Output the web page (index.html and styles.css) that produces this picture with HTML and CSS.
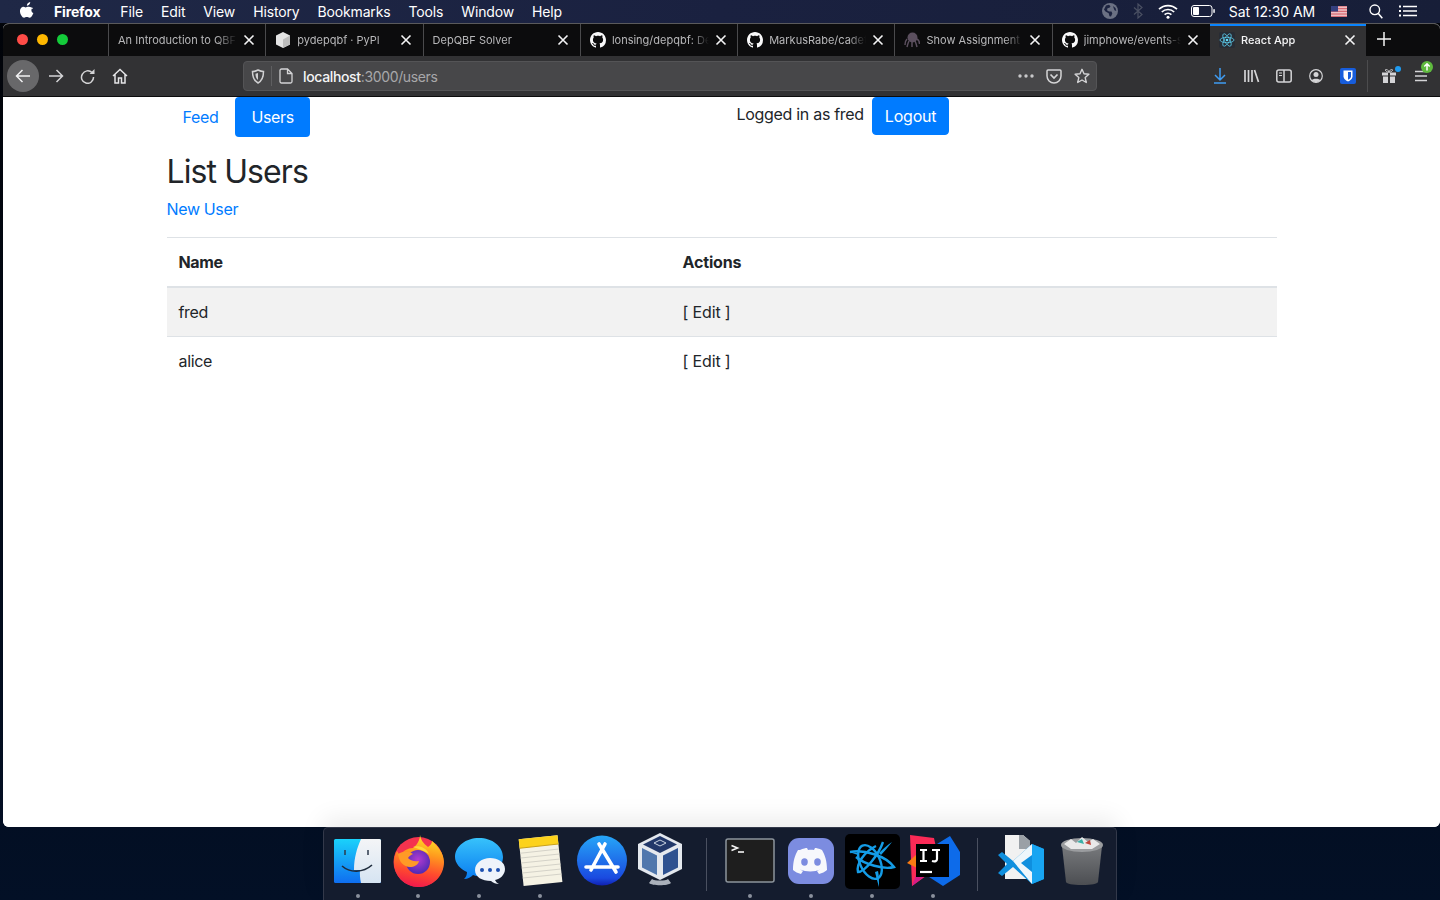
FILE: index.html
```html
<!DOCTYPE html>
<html lang="en">
<head>
    <meta charset="UTF-8">
    <title>React App</title>
    <link rel="stylesheet" href="styles.css">
</head>
<body>
    <svg class="defs" width="0" height="0">
        <symbol id="gh" viewBox="0 0 16 16"><path fill="#f9f9fa" d="M8 0C3.58 0 0 3.58 0 8c0 3.54 2.29 6.53 5.47 7.59.4.07.55-.17.55-.38 0-.19-.01-.82-.01-1.49-2.01.37-2.53-.49-2.69-.94-.09-.23-.48-.94-.82-1.13-.28-.15-.68-.52-.01-.53.63-.01 1.08.58 1.23.82.72 1.21 1.87.87 2.33.66.07-.52.28-.87.51-1.07-1.78-.2-3.64-.89-3.64-3.95 0-.87.31-1.59.82-2.15-.08-.2-.36-1.02.08-2.12 0 0 .67-.21 2.2.82.64-.18 1.32-.27 2-.27.68 0 1.36.09 2 .27 1.53-1.04 2.2-.82 2.2-.82.44 1.1.16 1.92.08 2.12.51.56.82 1.27.82 2.15 0 3.07-1.87 3.75-3.65 3.95.29.25.54.73.54 1.48 0 1.07-.01 1.93-.01 2.2 0 .21.15.46.55.38A8.013 8.013 0 0016 8c0-4.42-3.58-8-8-8z"/></symbol>
        <symbol id="close" viewBox="0 0 12 12"><path d="M1.500 1.500l9 9M10.500 1.500l-9 9" stroke="#f4f4f5" stroke-width="1.600" fill="none"/></symbol>
    </svg>

    <!-- macos menu bar -->
    <header class="menubar">
        <svg class="apple" width="14" height="16" viewBox="0 0 14 16"><path fill="#fff" d="M10.200 0c.1 1-.3 1.900-.9 2.600-.6.7-1.500 1.200-2.400 1.100-.1-.9.3-1.900.9-2.500C8.400.6 9.400.1 10.200 0zM13 5.400c-1 .6-1.600 1.600-1.600 2.800 0 1.300.8 2.400 2 2.900-.3.9-.7 1.800-1.300 2.600-.7 1-1.500 2-2.600 2-1.100 0-1.400-.6-2.700-.6s-1.700.6-2.700.6c-1.100 0-1.900-1-2.600-2C.4 12.300-.2 10.400 0 8.600c.1-1.700 1-3.200 2.500-3.700 1.200-.4 2.300.4 3.100.5.8 0 1.900-.9 3.300-.7 1.600.1 3 .7 3.900 1.700z"/></svg>
        <nav class="menubar-items">
            <span class="app-name">Firefox</span>
            <span>File</span>
            <span>Edit</span>
            <span>View</span>
            <span>History</span>
            <span>Bookmarks</span>
            <span>Tools</span>
            <span>Window</span>
            <span>Help</span>
        </nav>
        <div class="menubar-status">
            <svg class="st-globe" width="16" height="16" viewBox="0 0 16 16"><circle cx="8" cy="8" r="8" fill="#6b7183"/><path fill="#1c2340" d="M4 2.500l3-.8 1.500 1.500-1 1.500-2 .5-.5 2 2 1.200 2.500.2.800 1.800-1.300 3-1.500-.2-.8-3L3.500 8.500 2 6.500zM11 3l2.500 2 .8 3-1.800-.8-.8-2z"/></svg>
            <svg class="st-bt" width="10" height="16" viewBox="0 0 10 16"><path d="M1 4.500l8 7-4 3.500V1l4 3.500-8 7" fill="none" stroke="#4a5063" stroke-width="1.200"/></svg>
            <svg class="st-wifi" width="20" height="15" viewBox="0 0 20 15"><path d="M1 5.200a13 13 0 0118 0M3.800 8a9 9 0 0112.400 0M6.600 10.700a5 5 0 016.800 0" fill="none" stroke="#fff" stroke-width="1.700"/><circle cx="10" cy="13.300" r="1.500" fill="#fff"/></svg>
            <svg class="st-batt" width="24" height="12" viewBox="0 0 24 12"><rect x=".5" y=".5" width="20.500" height="11" rx="2.500" fill="none" stroke="#fff"/><rect x="2" y="2" width="6" height="8" rx="1" fill="#fff"/><rect x="22.300" y="4" width="1.500" height="4" rx=".7" fill="#fff"/></svg>
            <span class="clock">Sat 12:30 AM</span>
            <svg class="st-flag" width="16" height="11" viewBox="0 0 16 11"><rect width="16" height="11" fill="#fff"/><path d="M0 .8h16M0 2.400h16M0 4h16M0 5.600h16M0 7.200h16M0 8.800h16M0 10.400h16" stroke="#c8303c" stroke-width=".8"/><rect width="7" height="5.500" fill="#35407f"/></svg>
            <svg class="st-search" width="14" height="15" viewBox="0 0 14 15"><circle cx="5.800" cy="5.800" r="4.800" fill="none" stroke="#fff" stroke-width="1.400"/><path d="M9.300 9.600l4 4.600" stroke="#fff" stroke-width="1.600"/></svg>
            <svg class="st-list" width="18" height="12" viewBox="0 0 18 12"><path d="M4 1.500h14M4 6h14M4 10.500h14" stroke="#fff" stroke-width="1.500"/><path d="M0 1.500h2M0 6h2M0 10.500h2" stroke="#fff" stroke-width="1.800"/></svg>
        </div>
    </header>

    <div class="window">
        <div class="tabstrip">
            <div class="lights">
                <i class="light red"></i>
                <i class="light yellow"></i>
                <i class="light green"></i>
            </div>
            <div class="tab">
                <span class="tab-title">An Introduction to QBF</span>
                <svg class="tab-close" width="12" height="12"><use href="#close"/></svg>
            </div>
            <div class="tab">
                <svg class="favicon" width="16" height="16" viewBox="0 0 16 16"><path fill="#e4e4e4" d="M8 0l7 3.500v9L8 16l-7-3.500v-9z"/><path fill="#bdbdbd" d="M8 7.500V16l7-3.500v-9z"/></svg>
                <span class="tab-title">pydepqbf · PyPI</span>
                <svg class="tab-close" width="12" height="12"><use href="#close"/></svg>
            </div>
            <div class="tab">
                <span class="tab-title">DepQBF Solver</span>
                <svg class="tab-close" width="12" height="12"><use href="#close"/></svg>
            </div>
            <div class="tab">
                <svg class="favicon" width="16" height="16"><use href="#gh"/></svg>
                <span class="tab-title">lonsing/depqbf: De</span>
                <svg class="tab-close" width="12" height="12"><use href="#close"/></svg>
            </div>
            <div class="tab">
                <svg class="favicon" width="16" height="16"><use href="#gh"/></svg>
                <span class="tab-title">MarkusRabe/cadet</span>
                <svg class="tab-close" width="12" height="12"><use href="#close"/></svg>
            </div>
            <div class="tab">
                <svg class="favicon" width="16" height="16" viewBox="0 0 16 16"><circle cx="8.500" cy="5.500" r="5" fill="#5b4f5e"/><path d="M3 7C1 9 1 12 1 13M5 9c-1 2-1.500 4-2 6M8 10v5M11 9c1 2 1.500 4 2 6M13 7c2 1 2.500 3 2.500 5" stroke="#5b4f5e" stroke-width="1.500" fill="none"/></svg>
                <span class="tab-title">Show Assignment</span>
                <svg class="tab-close" width="12" height="12"><use href="#close"/></svg>
            </div>
            <div class="tab">
                <svg class="favicon" width="16" height="16"><use href="#gh"/></svg>
                <span class="tab-title">jimphowe/events-s</span>
                <svg class="tab-close" width="12" height="12"><use href="#close"/></svg>
            </div>
            <div class="tab tab-active">
                <svg class="favicon" width="16" height="16" viewBox="0 0 16 16"><rect width="16" height="16" rx="2" fill="#282c34"/><g fill="none" stroke="#61dafb" stroke-width=".7"><ellipse cx="8" cy="8" rx="7" ry="2.700"/><ellipse cx="8" cy="8" rx="7" ry="2.700" transform="rotate(60 8 8)"/><ellipse cx="8" cy="8" rx="7" ry="2.700" transform="rotate(120 8 8)"/></g><circle cx="8" cy="8" r="1.300" fill="#61dafb"/></svg>
                <span class="tab-title">React App</span>
                <svg class="tab-close" width="12" height="12"><use href="#close"/></svg>
            </div>
            <div class="newtab">
                <svg width="14" height="14" viewBox="0 0 14 14"><path d="M7 0v14M0 7h14" stroke="#f4f4f5" stroke-width="1.500"/></svg>
            </div>
        </div>

        <div class="toolbar">
            <div class="tb-btn back">
                <svg width="16" height="14" viewBox="0 0 16 14"><path d="M15 7H1.500M7.500 1l-6 6 6 6" fill="none" stroke="#f1f1f2" stroke-width="1.500"/></svg>
            </div>
            <div class="tb-btn forward">
                <svg width="16" height="14" viewBox="0 0 16 14"><path d="M1 7h13.500M8.500 1l6 6-6 6" fill="none" stroke="#d4d4d6" stroke-width="1.500"/></svg>
            </div>
            <div class="tb-btn">
                <svg width="16" height="16" viewBox="0 0 16 16"><path d="M13.500 8.500A6 6 0 112.500 5.500 6 6 0 0112 4" transform="translate(0 .5)" fill="none" stroke="#d4d4d6" stroke-width="1.500"/><path d="M14.500 1v5h-5z" fill="#d4d4d6"/></svg>
            </div>
            <div class="tb-btn">
                <svg width="16" height="16" viewBox="0 0 16 16"><path d="M1 8l7-6.500L15 8M3 6.500V15h3.500v-5h3v5H13V6.500" fill="none" stroke="#e4e4e6" stroke-width="1.500"/></svg>
            </div>

            <div class="urlbar">
                <svg class="url-shield" width="14" height="15" viewBox="0 0 14 15"><path d="M1.500 2.500C3 2.500 5 2 7 1c2 1 4 1.500 5.500 1.500 0 5-1 9-5.500 11.500C2.500 11.500 1.500 7.500 1.500 2.500z" fill="none" stroke="#d0d0d2" stroke-width="1.500"/><path d="M7 4v7C5 9.500 4.500 7.500 4.500 4.800z" fill="#d0d0d2"/></svg>
                <i class="url-sep"></i>
                <svg class="url-page" width="14" height="16" viewBox="0 0 14 16"><path d="M2.500 1H8.500L13 5.500V13.500a1.500 1.500 0 01-1.500 1.500h-9A1.500 1.500 0 011 13.500v-11A1.500 1.500 0 012.500 1zM8.500 1v4.500H13" fill="none" stroke="#d4d4d6" stroke-width="1.300"/></svg>
                <span class="url-text"><b>localhost</b>:3000/users</span>
                <div class="url-actions">
                    <svg width="16" height="4" viewBox="0 0 16 4"><circle cx="2" cy="2" r="1.700" fill="#c8c8ca"/><circle cx="8" cy="2" r="1.700" fill="#c8c8ca"/><circle cx="14" cy="2" r="1.700" fill="#c8c8ca"/></svg>
                    <svg width="16" height="15" viewBox="0 0 16 15"><path d="M2 1h12a1 1 0 011 1v5a7 7 0 01-14 0V2a1 1 0 011-1z" fill="none" stroke="#d4d4d6" stroke-width="1.500"/><path d="M4.500 5.500L8 9l3.500-3.500" fill="none" stroke="#d4d4d6" stroke-width="1.700"/></svg>
                    <svg width="16" height="16" viewBox="0 0 16 16"><path d="M8 1.300l2 4.500 4.900.5-3.700 3.300 1.100 4.900L8 12l-4.300 2.500 1.100-4.900L1.100 6.300 6 5.800z" fill="none" stroke="#d4d4d6" stroke-width="1.400" stroke-linejoin="round"/></svg>
                </div>
            </div>

            <div class="tb-right">
                <div class="tb-btn">
                    <svg width="14" height="16" viewBox="0 0 14 16"><path d="M7 0v11.500M2 7l5 5 5-5" fill="none" stroke="#3f9cf2" stroke-width="1.500"/><path d="M1 15h12" stroke="#3f9cf2" stroke-width="1.600"/></svg>
                </div>
                <div class="tb-btn">
                    <svg width="16" height="14" viewBox="0 0 16 14"><path d="M1 1v12M4.500 1v12M8 1v12M10.500 1l4 12" fill="none" stroke="#d4d4d6" stroke-width="1.700"/></svg>
                </div>
                <div class="tb-btn">
                    <svg width="16" height="14" viewBox="0 0 16 14"><rect x=".8" y="1" width="14.400" height="12" rx="2" fill="none" stroke="#d4d4d6" stroke-width="1.500"/><path d="M8 1v12" stroke="#d4d4d6" stroke-width="1.500"/><path d="M3 4h3M3 6.500h3" stroke="#d4d4d6"/></svg>
                </div>
                <div class="tb-btn">
                    <svg width="14" height="14" viewBox="0 0 14 14"><circle cx="7" cy="7" r="6.300" fill="none" stroke="#d4d4d6" stroke-width="1.200"/><circle cx="7" cy="5.500" r="2.500" fill="#d4d4d6"/><path d="M2.500 11.500c1-2.500 8-2.500 9 0L7 13.500z" fill="#d4d4d6"/></svg>
                </div>
                <div class="tb-btn">
                    <svg width="16" height="16" viewBox="0 0 16 16"><rect width="16" height="16" rx="2" fill="#175ddc"/><path d="M3.500 2.500h9v6c0 2.500-2.500 4-4.500 5-2-1-4.500-2.500-4.500-5z" fill="#fff"/><path d="M8 4v7.700c1.300-.7 3-1.800 3-3.300V4z" fill="#175ddc"/></svg>
                </div>
                <i class="tb-sep"></i>
                <div class="tb-btn gift">
                    <svg width="14" height="14" viewBox="0 0 14 14"><path fill="#d4d4d6" d="M0 3.500h6v3H0zM8 3.500h6v3H8zM1 7.500h5V14H1zM8 7.500h5V14H8z"/><path d="M7 3.200C5 3.200 3.500 2.300 3.500 1S6 0 7 3.200C8 0 10.500 0 10.500 1S9 3.200 7 3.200z" fill="none" stroke="#d4d4d6"/></svg>
                    <i class="gift-dot"></i>
                </div>
                <div class="tb-btn hamburger">
                    <svg width="12" height="12" viewBox="0 0 12 12"><path d="M0 1.500h12M0 6h12M0 10.500h12" stroke="#d4d4d6" stroke-width="1.500"/></svg>
                    <svg class="update-badge" width="12" height="12" viewBox="0 0 12 12"><circle cx="6" cy="6" r="6" fill="#5fba3e"/><path d="M6 9.500V3M3.300 5.500L6 2.800l2.700 2.700" fill="none" stroke="#fff" stroke-width="1.500"/></svg>
                </div>
            </div>
        </div>

        <main class="page">
            <div class="container">
                <div class="top-row">
                    <ul class="pills">
                        <li><a class="pill pill-feed" href="#">Feed</a></li>
                        <li><a class="pill pill-active" href="#">Users</a></li>
                    </ul>
                    <div class="login-box">
                        <span class="login-text">Logged in as fred</span>
                        <button class="btn-logout">Logout</button>
                    </div>
                </div>

                <h2 class="page-title">List Users</h2>
                <a class="new-link" href="#">New User</a>

                <table class="users">
                    <thead>
                        <tr>
                            <th class="col-name">Name</th>
                            <th class="col-actions">Actions</th>
                        </tr>
                    </thead>
                    <tbody>
                        <tr class="striped">
                            <td>fred</td>
                            <td class="col-actions">[ Edit ]</td>
                        </tr>
                        <tr>
                            <td>alice</td>
                            <td class="col-actions">[ Edit ]</td>
                        </tr>
                    </tbody>
                </table>
            </div>
        </main>
    </div>

    <footer class="dock-area">
        <div class="dock">
            <div class="dock-item">
                <svg width="52" height="52" viewBox="0 0 52 52"><defs><linearGradient id="f1" x1="0" y1="0" x2="0" y2="1"><stop offset="0" stop-color="#1ad2fb"/><stop offset="1" stop-color="#0f6ef0"/></linearGradient><linearGradient id="f2" x1="0" y1="0" x2="0" y2="1"><stop offset="0" stop-color="#f4f5f7"/><stop offset="1" stop-color="#d6e4f2"/></linearGradient></defs><g transform="translate(-1 2)"><rect x="3" y="3" width="47" height="44" rx="1.500" fill="url(#f1)"/><path d="M30 3h18.500A1.500 1.500 0 0150 4.500v41a1.500 1.500 0 01-1.500 1.500H30c-1-5-1.300-9-1-13h-6c0-12 3-22 7-31z" fill="url(#f2)"/><path d="M14 14v5M37 14v5" stroke="#2c3a4c" stroke-width="1.500"/><path d="M11 30c8 7 21 7 30-1" fill="none" stroke="#1e2b3c" stroke-width="1.600"/></g></svg>
                <i class="dock-dot"></i>
            </div>
            <div class="dock-item">
                <svg width="52" height="54" viewBox="0 0 52 54"><defs><linearGradient id="fx1" x1=".6" y1="0" x2=".4" y2="1"><stop offset="0" stop-color="#ffe226"/><stop offset=".35" stop-color="#ff9a1e"/><stop offset=".7" stop-color="#ff4a2e"/><stop offset="1" stop-color="#f0184c"/></linearGradient><radialGradient id="fx2" cx=".5" cy=".4" r=".6"><stop offset="0" stop-color="#b43bd0"/><stop offset="1" stop-color="#4d2ab4"/></radialGradient></defs><circle cx="25.500" cy="28" r="25" fill="#f5334e"/><path d="M27 1c1 5 3 8 8 12 3-2 4-4 4-6 5 4 12 12 12 21 0 14-11 25-25 25S1 42 1 28c0-4 1-8 3-11 1 2 2 3 3 4 3-4 8-7 13-7 4-3 7-8 7-13z" fill="url(#fx1)"/><circle cx="25" cy="28" r="12" fill="url(#fx2)"/><path d="M5 20c5-3 11-3 15 0-2 1-4 2-5 4 2 2 6 4 11 3-1 4-5 6-9 6-6 0-11-5-12-13z" fill="#ff9a26"/><path d="M20 13c5-2 13 0 16 7-4-3-10-5-16-7z" fill="#ffd83a"/></svg>
                <i class="dock-dot"></i>
            </div>
            <div class="dock-item">
                <svg width="52" height="52" viewBox="0 0 52 52"><defs><linearGradient id="m1" x1="0" y1="0" x2="0" y2="1"><stop offset="0" stop-color="#37c2fb"/><stop offset="1" stop-color="#0a7cf0"/></linearGradient></defs><g transform="translate(0 1)"><path d="M25 3c13 0 24 8 24 19 0 10-10 19-24 19-2 0-4 0-6-1-2 2-5 4-9 4 2-2 3-4 3-7C6 34 1 28 1 22 1 11 12 3 25 3z" fill="url(#m1)"/><path d="M36 23c8 0 15 4 15 11 0 6-5 10-10 11 1 2 2 3 4 4-3 0-6-1-8-3-9 0-16-4-16-11s7-12 15-12z" fill="#eef3fa"/><circle cx="28" cy="35" r="2" fill="#1c50b0"/><circle cx="36" cy="35" r="2" fill="#1c50b0"/><circle cx="44" cy="35" r="2" fill="#1c50b0"/></g></svg>
                <i class="dock-dot"></i>
            </div>
            <div class="dock-item">
                <svg width="52" height="52" viewBox="0 0 52 52"><g transform="rotate(-6 26 26)"><rect x="6" y="3" width="39" height="47" fill="#f5f2e4"/><path d="M6 3h39v9H6z" fill="#fcd21c"/><path d="M6 12h39" stroke="#c9a11a"/><path d="M6 17h39M6 22h39M6 27h39M6 32h39M6 37h39M6 42h39" stroke="#d4d2c8"/></g></svg>
                <i class="dock-dot"></i>
            </div>
            <div class="dock-item">
                <svg width="52" height="52" viewBox="0 0 52 52"><defs><linearGradient id="as" x1="0" y1="0" x2="0" y2="1"><stop offset="0" stop-color="#26a6f8"/><stop offset=".85" stop-color="#1a4ae0"/><stop offset="1" stop-color="#1020b0"/></linearGradient></defs><circle cx="26" cy="26.500" r="25" fill="url(#as)"/><path d="M29 10L15 36M23 10l17 28M10 33h32" stroke="#fff" stroke-width="3.600" stroke-linecap="round"/></svg>
            </div>
            <div class="dock-item vbox">
                <svg width="46" height="53" viewBox="0 0 46 53"><path d="M23 0l22 11v25L23 47 1 36V11z" fill="#e4e8ee"/><path d="M23 3l17 8.500L23 20 6 11.500z" fill="#22386a"/><path d="M5 15l15 7.500V42L5 34.500z" fill="#5077ad"/><path d="M41 15l-15 7.500V42l15-7.500z" fill="#2e5190"/><path d="M15 46c2 2 14 2 16 0l3 4c-3 3-19 3-22 0z" fill="#aab0ba"/><path d="M17 10l6-3 6 3-6 3z" fill="none" stroke="#c8d2e0"/></svg>
            </div>
            <i class="dock-sep"></i>
            <div class="dock-item">
                <svg width="52" height="52" viewBox="0 0 52 52"><rect x="2" y="5" width="48" height="43" rx="2" fill="#1e1e1e" stroke="#8c949c" stroke-width="1.500"/><path d="M7.500 11.500l6 2.500-6 2.500" fill="none" stroke="#f4f4f4" stroke-width="1.600"/><path d="M14 18h6" stroke="#f4f4f4" stroke-width="1.600"/></svg>
                <i class="dock-dot"></i>
            </div>
            <div class="dock-item">
                <svg width="52" height="52" viewBox="0 0 52 52"><g transform="translate(0 2)"><rect x="3" y="2" width="46" height="46" rx="11" fill="#7c8ce0"/><path d="M15 14c3-1.500 6-2 7-2l1 2c2-.3 4-.3 6 0l1-2c1 0 4 .5 7 2 3 5 5 11 5 20-2 2-5 3-8 4l-2-3c1-.3 2-1 3-1.500-5 2.500-14 2.500-20 0 1 .5 2 1.200 3 1.500l-2 3c-3-1-6-2-8-4 0-9 2-15 5-20z" fill="#f7f8fc"/><ellipse cx="19.500" cy="26" rx="3.300" ry="3.700" fill="#7c8ce0"/><ellipse cx="32.500" cy="26" rx="3.300" ry="3.700" fill="#7c8ce0"/></g></svg>
                <i class="dock-dot"></i>
            </div>
            <div class="dock-item">
                <svg width="55" height="55" viewBox="0 0 55 55"><rect width="55" height="55" rx="5" fill="#000"/><g fill="none" stroke="#149ce6" stroke-width="2.400"><ellipse cx="25" cy="28" rx="10" ry="18" transform="rotate(-25 25 28)"/><path d="M5 18c14-3 36 4 44 15-10 3-30-3-38-10"/><path d="M38 8C34 20 20 38 13 38c-2-8 6-20 18-26"/></g><path d="M47 8c-5 6-8 10-11 13l-2-2c4-4 8-8 13-11zM34 53c-2-7-3-11-4-15l3-1c1 4 1 10 1 16zM4 18l10 1-1 2z" fill="#149ce6"/></svg>
                <i class="dock-dot"></i>
            </div>
            <div class="dock-item">
                <svg width="54" height="54" viewBox="0 0 54 54"><path d="M31 10L44 2l10 16v23L37 52 20 41z" fill="#0d6bea"/><path d="M4 1l24 3 6 28-28 20z" fill="#fb2a56"/><path d="M1 29l10-9 4 16z" fill="#f97a12"/><path d="M6 52l8-22 18 2z" fill="#d51c8a"/><rect x="10" y="10" width="33" height="33" fill="#000"/><path d="M14 16h7M17.500 16v11M14 27h7M26 16h8M31 16v9c0 2-2 3-5 2" fill="none" stroke="#fff" stroke-width="2.200"/><path d="M14 38h12" stroke="#fff" stroke-width="2.200"/></svg>
                <i class="dock-dot"></i>
            </div>
            <i class="dock-sep"></i>
            <div class="dock-item">
                <svg width="52" height="52" viewBox="0 0 52 52"><path d="M10 1h18l7 6v38H10z" fill="#f1f1f1"/><path d="M24 1h4l7 6v8H24z" fill="#9aa0a6"/><path d="M3 21l4-3 11 9 19-17 12 5v30l-12 5-19-17-11 9-4-3 9-9z" fill="#0f8fde"/><path d="M37 10l12 5v30l-12 5z" fill="#18a5f2"/><path d="M18 27l19-17v11l-11 8 11 9v12z" fill="#eef6fb"/></svg>
            </div>
            <div class="dock-item">
                <svg width="52" height="52" viewBox="0 0 52 52"><defs><linearGradient id="tr" x1="0" y1="0" x2="0" y2="1"><stop offset="0" stop-color="#77797c"/><stop offset="1" stop-color="#4c4e52"/></linearGradient></defs><path d="M6 12h40l-4 36c-1 2-6 3-16 3s-15-1-16-3z" fill="url(#tr)"/><ellipse cx="26" cy="11" rx="21" ry="7" fill="#9a9c9f"/><path d="M8 10l7-5 5 4 6-6 6 5 5-3 7 5-8 5H15z" fill="#e9e9ea"/><path d="M21 8l5-3 2 5z" fill="#38b0a8"/><path d="M29 9l5-3 1 5z" fill="#c0443a"/></svg>
            </div>
        </div>
    </footer>
</body>
</html>
```

FILE: styles.css
```css
* {
    box-sizing: border-box;
}

html, body {
    margin: 0;
    padding: 0;
}

body {
    width: 1440px;
    height: 900px;
    overflow: hidden;
    font-family: Inter, "Noto Sans", sans-serif;
    background: linear-gradient(180deg, #010308 0%, #031026 100%);
}

.defs {
    display: block;
    height: 0;
}

/* menu bar */
.menubar {
    display: flex;
    align-items: center;
    height: 23px;
    padding-bottom: 1px;
    background: linear-gradient(90deg, #1f2846 0%, #1a2140 50%, #171e38 100%);
    color: #fff;
    font-size: 14px;
}

.apple {
    margin-left: 20px;
    margin-top: -2px;
}

.menubar-items {
    display: flex;
    gap: 18px;
    margin-left: 20px;
    letter-spacing: -0.15px;
}

.app-name {
    font-weight: 700;
    margin-right: 2px;
}

.menubar-status {
    display: flex;
    align-items: center;
    margin-left: auto;
    padding-right: 23px;
}

.st-bt {
    margin-left: 15px;
}

.st-wifi {
    margin-left: 15px;
}

.st-batt {
    margin-left: 13px;
}

.clock {
    margin-left: 14px;
    letter-spacing: -0.1px;
}

.st-flag {
    margin-left: 16px;
}

.st-search {
    margin-left: 22px;
}

.st-list {
    margin-left: 16px;
}

/* browser window */
.window {
    display: flex;
    flex-direction: column;
    height: 804px;
    margin-left: 3px;
    border-radius: 6px 6px 6px 6px;
    border-top: 1px solid #5a5a5c;
    overflow: hidden;
    background: #fff;
}

.tabstrip {
    display: flex;
    height: 32px;
    flex-shrink: 0;
    background: #0c0c0d;
    color: #b8b8ba;
    font-size: 11px;
}

.lights {
    display: flex;
    align-items: center;
    gap: 9px;
    width: 105px;
    padding-left: 14px;
    padding-bottom: 1px;
}

.light {
    width: 11px;
    height: 11px;
    border-radius: 50%;
}

.red {
    background: #ff4c47;
}

.yellow {
    background: #ffb800;
}

.green {
    background: #14cc3a;
}

.tab {
    display: flex;
    align-items: center;
    width: 157.3px;
    padding: 0 10.5px 0 9px;
    border-left: 1px solid #4a4a4c;
}

.tab-title {
    flex: 1;
    min-width: 0;
    white-space: nowrap;
    overflow: hidden;
    -webkit-mask-image: linear-gradient(90deg, #000 82%, transparent 100%);
    mask-image: linear-gradient(90deg, #000 82%, transparent 100%);
}

.favicon {
    flex-shrink: 0;
    margin-right: 6px;
}

.tab-close {
    flex-shrink: 0;
    margin-left: 6px;
}

.tab-active {
    background: #323234;
    color: #f4f4f5;
    border-left: none;
    border-top: 2px solid #0a84ff;
    margin-left: 1px;
    width: 156.3px;
    padding: 0 10px 2px 9px;
    font-weight: 500;
}

.newtab {
    display: flex;
    align-items: center;
    justify-content: center;
    width: 35px;
    padding-bottom: 2px;
}

.toolbar {
    display: flex;
    align-items: center;
    flex-shrink: 0;
    height: 41px;
    padding: 0 3px 0 4px;
    background: #323234;
    border-bottom: 1px solid #0c0c0d;
}

.tb-btn {
    position: relative;
    display: flex;
    align-items: center;
    justify-content: center;
    width: 32px;
    height: 32px;
    flex-shrink: 0;
}

.back {
    border-radius: 50%;
    background: #68686a;
}

.forward {
    margin-left: 1px;
}

.urlbar {
    display: flex;
    align-items: center;
    flex: 0 0 854px;
    height: 30px;
    margin-left: 107px;
    border-radius: 4px;
    background: #474749;
    border: 1px solid #545456;
    color: #a8a8aa;
    font-size: 14px;
    letter-spacing: -0.35px;
}

.url-shield {
    margin-left: 7px;
}

.url-sep {
    width: 1px;
    height: 20px;
    margin-left: 6px;
    background: #5f5f61;
}

.url-page {
    margin-left: 7px;
}

.url-text {
    margin-left: 10px;
}

.url-text b {
    color: #f4f4f5;
    font-weight: 500;
}

.url-actions {
    display: flex;
    align-items: center;
    gap: 12px;
    margin-left: auto;
    padding-right: 6px;
}

.tb-right {
    display: flex;
    align-items: center;
    margin-left: auto;
}

.tb-sep {
    width: 1px;
    height: 32px;
    margin: 0 5px 0 3px;
    background: #4c4c4e;
}

.gift-dot {
    position: absolute;
    top: 6px;
    right: 4px;
    width: 6px;
    height: 6px;
    border-radius: 50%;
    background: #1f9bf0;
}

.update-badge {
    position: absolute;
    top: 1px;
    right: 4px;
}

/* page content, bootstrap-ish */
.page {
    flex: 1;
    background: #fff;
    color: #212529;
    font-size: 16px;
    line-height: 24px;
    letter-spacing: -0.35px;
}

.container {
    width: 1110px;
    margin-left: 163.5px;
}

.top-row {
    display: flex;
}

.pills {
    display: flex;
    width: 570px;
    margin: 0;
    padding: 0;
    list-style: none;
}

.pill {
    display: block;
    padding: 8px 16px;
    border-radius: 4px;
    color: #007bff;
    text-decoration: none;
}

.pill-feed {
    padding-right: 17px;
}

.pill-active {
    background: #007bff;
    color: #fff;
}

.login-box {
    display: flex;
    align-items: flex-start;
}

.login-text {
    padding-top: 5px;
    letter-spacing: -0.3px;
}

.btn-logout {
    height: 38px;
    margin-left: 8px;
    padding: 0 12px;
    border: 1px solid #007bff;
    border-radius: 4px;
    background: #007bff;
    color: #fff;
    font: inherit;
    letter-spacing: -0.2px;
}

.page-title {
    margin: 16px 0 6px;
    font-size: 32px;
    font-weight: 400;
    line-height: 38.4px;
    letter-spacing: -0.9px;
}

.new-link {
    display: block;
    color: #007bff;
    text-decoration: none;
}

.users {
    width: 100%;
    margin-top: 16px;
    border-collapse: collapse;
}

.users th,
.users td {
    padding: 12px;
    text-align: left;
    border-top: 1px solid #dee2e6;
}

.users th {
    font-weight: 700;
    border-bottom: 2px solid #dee2e6;
}

.users .col-actions {
    letter-spacing: -0.15px;
}

.col-name {
    width: 504px;
}

.striped {
    background: #f2f2f2;
}

/* dock */
.dock-area {
    display: flex;
    justify-content: center;
    height: 73px;
}

.dock {
    position: relative;
    display: flex;
    width: 794px;
    padding: 0 3.5px;
    background: #141c2e;
    border: 1px solid #33394a;
    border-bottom: none;
    border-radius: 5px 5px 0 0;
    box-shadow: 0 -8px 24px rgba(0, 0, 0, 0.08);
}

.dock-item {
    position: relative;
    display: flex;
    justify-content: center;
    align-items: flex-start;
    width: 61px;
    padding-top: 6px;
}

.vbox {
    padding-top: 5px;
    padding-right: 6px;
}

.dock-dot {
    position: absolute;
    bottom: 2px;
    left: 28px;
    width: 4px;
    height: 4px;
    border-radius: 50%;
    background: #8a909c;
}

.dock-sep {
    width: 1px;
    height: 53px;
    margin: 10px 13px 0;
    background: #4a5060;
}
```
